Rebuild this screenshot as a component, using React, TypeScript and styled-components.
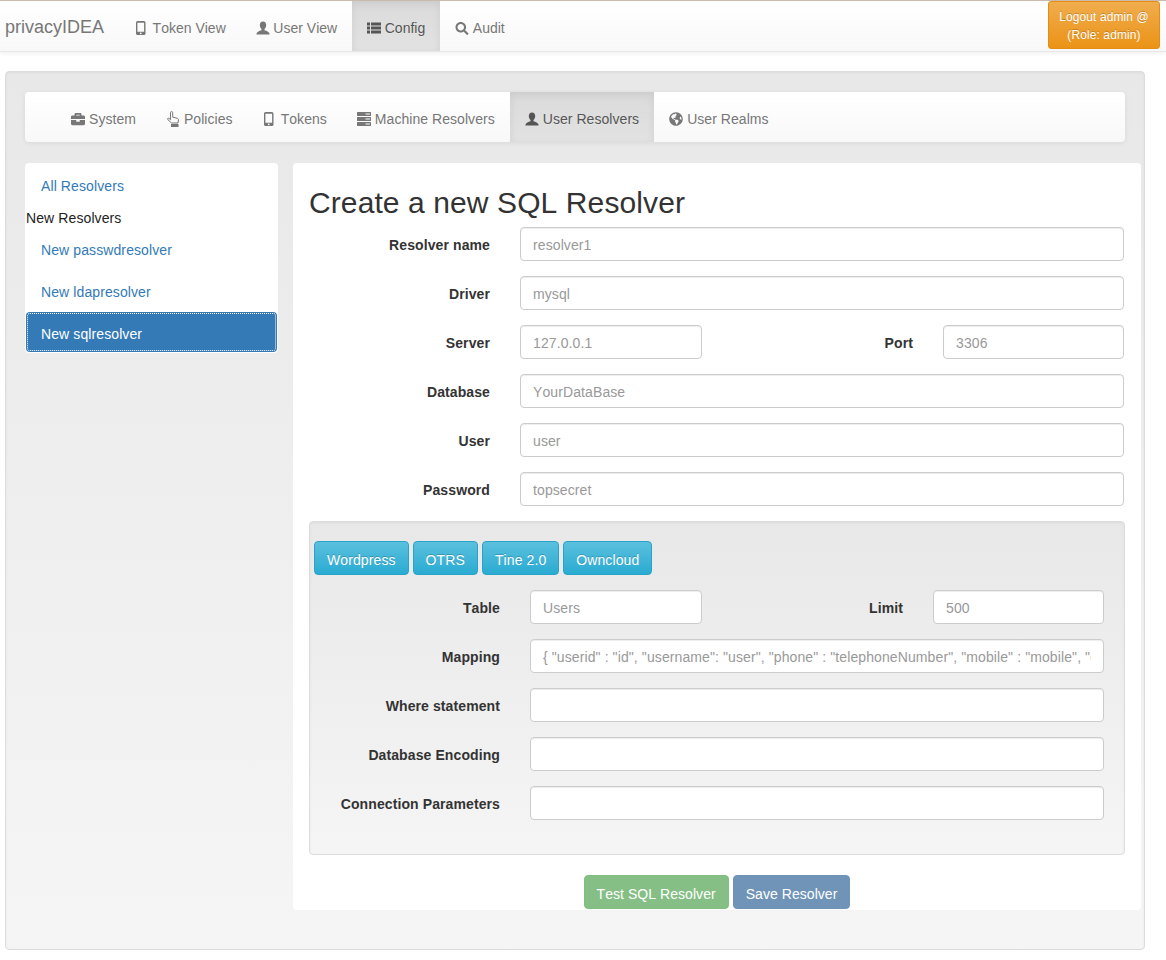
import React from 'react';
import styled, {createGlobalStyle} from 'styled-components';
import {FaSearch, FaBriefcase, FaGlobeAmericas} from 'react-icons/fa';

const GlobalStyle = createGlobalStyle`
  html, body {
    margin: 0;
    padding: 0;
    background: #fff;
    color: #333;
    font-family: "Liberation Sans", Arial, sans-serif;
    font-size: 14px;
    line-height: 20px;
    font-kerning: none;
    letter-spacing: 0.1px;
  }
  * {
    box-sizing: border-box;
  }
  input, button {
    font-kerning: none;
    letter-spacing: 0.1px;
  }
  input::placeholder {
    color: #999;
    opacity: 1;
  }
`;

const NavItem = styled.div<{$active?: boolean}>`
  display: flex;
  align-items: center;
  gap: 4px;
  height: 50px;
  padding: 4px 15px 0;
  letter-spacing: 0.05px;
  color: ${(props) => (props.$active ? '#555' : '#777')};
  text-shadow: 0 1px 0 rgba(255, 255, 255, 0.25);
  background: ${(props) => (props.$active ? 'linear-gradient(to bottom, #dbdbdb 0, #e2e2e2 100%)' : 'none')};
  box-shadow: ${(props) => (props.$active ? 'inset 0 3px 9px rgba(0, 0, 0, 0.075)' : 'none')};
  svg {
    flex: none;
    width: 14px;
  }
`;

const TopBar = styled.nav`
  display: flex;
  height: 52px;
  padding-left: 5px;
  border-top: 1px solid #c9bcae;
  border-bottom: 1px solid #e7e7e7;
  background: linear-gradient(to bottom, #fff 0, #f8f8f8 100%);
  box-shadow: 0 1px 5px rgba(0, 0, 0, 0.075);
  ${NavItem} {
    gap: 3.6px;
    letter-spacing: 0;
  }
`;

const Brand = styled.div`
  width: 115px;
  font-size: 18px;
  line-height: 52px;
  letter-spacing: 0;
  color: #777;
  text-shadow: 0 1px 0 rgba(255, 255, 255, 0.25);
`;

const LogoutButton = styled.button`
  width: 112px;
  height: 48px;
  margin: 0 6px 0 auto;
  padding: 6px 10px;
  border: 1px solid #e38d13;
  border-radius: 3px;
  background: linear-gradient(to bottom, #f0ad4e 0, #eb9316 100%);
  color: #fff;
  font-family: inherit;
  font-size: 12px;
  line-height: 18px;
  text-shadow: 0 -1px 0 rgba(0, 0, 0, 0.2);
`;

const Well = styled.main`
  margin: 19px 21px 0 5px;
  height: 879px;
  padding: 20px 19px;
  border: 1px solid #dcdcdc;
  border-radius: 4px;
  background: linear-gradient(to bottom, #e8e8e8 0, #f5f5f5 100%);
  box-shadow: inset 0 1px 3px rgba(0, 0, 0, 0.05);
`;

const SubNav = styled.nav`
  display: flex;
  height: 50px;
  padding-left: 31px;
  border-radius: 4px;
  background: linear-gradient(to bottom, #fff 0, #f8f8f8 100%);
  box-shadow: 0 1px 5px rgba(0, 0, 0, 0.075);
`;

const Columns = styled.div`
  display: flex;
  align-items: flex-start;
  gap: 15px;
  margin: 21px -16px 0 0;
`;

const Sidebar = styled.aside`
  flex: none;
  width: 253px;
  padding: 1px;
  border-radius: 4px;
  background: #fff;
`;

const SideLink = styled.div<{$active?: boolean}>`
  height: 40px;
  margin-bottom: 2px;
  padding: 12px 15px 8px;
  border-radius: 4px;
  color: ${(props) => (props.$active ? '#fff' : '#337ab7')};
  background: ${(props) => (props.$active ? '#337ab7' : 'none')};
  outline: ${(props) => (props.$active ? '1px dotted #fff' : 'none')};
  outline-offset: -2px;
  &:last-child {
    margin-bottom: 0;
  }
`;

const SideTitle = styled.div`
  margin-top: 4px;
  color: #222;
`;

const Panel = styled.section`
  flex: 1;
  min-width: 0;
  height: 747px;
  padding: 20px 16px 0;
  border-radius: 4px;
  background: #fff;
`;

const Title = styled.h2`
  margin: 3px 0 8px;
  font-size: 30px;
  font-weight: 500;
  line-height: 33px;
  color: #333;
`;

const Row = styled.div`
  display: grid;
  grid-template-columns: 181px 1fr;
  column-gap: 30px;
  align-items: center;
  height: 34px;
  margin-bottom: 15px;
`;

const SplitRow = styled.div`
  display: grid;
  grid-template-columns: 181px 182px 181px 181px;
  column-gap: 30px;
  align-items: center;
  height: 34px;
  margin-bottom: 15px;
`;

const Label = styled.label`
  position: relative;
  top: 1px;
  text-align: right;
  font-weight: 700;
  color: #333;
`;

const Input = styled.input`
  display: block;
  width: 100%;
  min-width: 0;
  height: 34px;
  padding: 7px 12px 5px;
  border: 1px solid #ccc;
  border-radius: 4px;
  background: #fff;
  box-shadow: inset 0 1px 1px rgba(0, 0, 0, 0.075);
  color: #555;
  font-family: inherit;
  font-size: 14px;
`;

const MainFields = styled.div`
  margin-right: 1px;
`;

const SubWell = styled.div`
  height: 334px;
  margin-top: 15px;
  padding: 19px 20px 0 4px;
  border: 1px solid #dcdcdc;
  border-radius: 4px;
  background: linear-gradient(to bottom, #e8e8e8 0, #f5f5f5 100%);
  box-shadow: inset 0 1px 3px rgba(0, 0, 0, 0.05);
`;

const Presets = styled.div`
  display: flex;
  gap: 4px;
  margin-bottom: 15px;
`;

const PresetButton = styled.button`
  height: 34px;
  padding: 8px 12px 4px;
  border: 1px solid #28a4c9;
  border-radius: 4px;
  background: linear-gradient(to bottom, #5bc0de 0, #2aabd2 100%);
  color: #fff;
  font-family: inherit;
  font-size: 14px;
  text-shadow: 0 -1px 0 rgba(0, 0, 0, 0.2);
`;

const Mapping = styled.div`
  padding-left: 16px;
  ${Row} {
    grid-template-columns: 170px 1fr;
  }
  ${SplitRow} {
    grid-template-columns: 170px 172px 171px 171px;
  }
`;

const Actions = styled.div`
  display: flex;
  justify-content: center;
  gap: 4px;
  margin-top: 20px;
`;

const ActionButton = styled.button<{$color: string; $border: string}>`
  height: 34px;
  padding: 8px 12px 4px;
  border: 1px solid ${(props) => props.$border};
  border-radius: 4px;
  background: ${(props) => props.$color};
  color: #fff;
  font-family: inherit;
  font-size: 14px;
  letter-spacing: 0.05px;
`;

// glyphicon look-alikes, react-icons has no such set
const PhoneIcon = () => (
  <svg height="14" viewBox="0 0 14 14" fill="currentColor">
    <path fillRule="evenodd" d="M2.6 0h6.3A1.6 1.6 0 0 1 10.5 1.6v10.8a1.6 1.6 0 0 1-1.6 1.6H2.6A1.6 1.6 0 0 1 1 12.4V1.6A1.6 1.6 0 0 1 2.6 0zm-.2 1.800v8.900h6.700V1.800zM5.750 11.400a.9.9 0 1 0 0 1.800.9.9 0 0 0 0-1.800z"/>
  </svg>
);

const UserIcon = () => (
  <svg height="14" viewBox="0 0 14 14" fill="currentColor">
    <path d="M7 .5C4.900.5 3.800 2.100 3.800 4.100c0 1.700.7 3.100 1.700 3.900v1.300C3.400 10.100.9 10.800.5 12.600v.9h13v-.9c-.4-1.800-2.900-2.500-5-3.300V8c1-.8 1.700-2.200 1.700-3.900C10.200 2.100 9.100.5 7 .5z"/>
  </svg>
);

const ListIcon = () => (
  <svg height="14" viewBox="0 0 14 14" fill="currentColor">
    <path d="M0 1.500h3v3H0zM4 1.500h10v3H4zM0 5.500h3v3H0zM4 5.500h10v3H4zM0 9.500h3v3H0zM4 9.500h10v3H4z"/>
  </svg>
);

const HandIcon = () => (
  <svg height="17" viewBox="0 0 14 17" fill="none" stroke="currentColor" strokeWidth="1">
    <path d="M4.500 8.700V1.700a1.100 1.100 0 0 1 2.200 0v4.500l4.300 1c1 .2 1.500.9 1.400 1.800L12 12H5.500L1.800 8.600c-.8-.9.3-1.900 1.200-1.200z"/>
    <path fill="currentColor" stroke="none" d="M5 13h7.500v3H5z"/>
  </svg>
);

const TasksIcon = () => (
  <svg height="14" viewBox="0 0 14 14" fill="currentColor">
    <path fillRule="evenodd" d="M.5 0h13a.5.5 0 0 1 .5.5v3a.5.5 0 0 1-.5.5H.5a.5.5 0 0 1-.5-.5v-3A.5.5 0 0 1 .5 0zm8 1.500v1H13v-1zM.5 5h13a.5.5 0 0 1 .5.5v3a.5.5 0 0 1-.5.5H.5a.5.5 0 0 1-.5-.5v-3A.5.5 0 0 1 .5 5zm8 1.500v1H13v-1zM.5 10h13a.5.5 0 0 1 .5.5v3a.5.5 0 0 1-.5.5H.5a.5.5 0 0 1-.5-.5v-3a.5.5 0 0 1 .5-.5zm8 1.500v1H13v-1z"/>
  </svg>
);

const navItems = [
  {label: 'Token View', icon: <PhoneIcon/>},
  {label: 'User View', icon: <UserIcon/>},
  {label: 'Config', icon: <ListIcon/>, active: true},
  {label: 'Audit', icon: <FaSearch size={13}/>},
];

const subItems = [
  {label: 'System', icon: <FaBriefcase size={14}/>},
  {label: 'Policies', icon: <HandIcon/>},
  {label: 'Tokens', icon: <PhoneIcon/>},
  {label: 'Machine Resolvers', icon: <TasksIcon/>},
  {label: 'User Resolvers', icon: <UserIcon/>, active: true},
  {label: 'User Realms', icon: <FaGlobeAmericas size={14}/>},
];

const mappingText = '{ "userid" : "id", "username": "user", "phone" : "telephoneNumber", "mobile" : "mobile", "email" : "mail", "surname" : "sn", "givenname" : "givenName" }';

function App() {
  return (
    <>
      <GlobalStyle/>
      <TopBar>
        <Brand>privacyIDEA</Brand>
        {navItems.map((item) => (
          <NavItem key={item.label} $active={item.active}>{item.icon}{item.label}</NavItem>
        ))}
        <LogoutButton>Logout admin @ (Role: admin)</LogoutButton>
      </TopBar>
      <Well>
        <SubNav>
          {subItems.map((item) => (
            <NavItem key={item.label} $active={item.active}>{item.icon}{item.label}</NavItem>
          ))}
        </SubNav>
        <Columns>
          <Sidebar>
            <SideLink>All Resolvers</SideLink>
            <SideTitle>New Resolvers</SideTitle>
            <SideLink>New passwdresolver</SideLink>
            <SideLink>New ldapresolver</SideLink>
            <SideLink $active>New sqlresolver</SideLink>
          </Sidebar>
          <Panel>
            <Title>Create a new SQL Resolver</Title>
            <MainFields>
              <Row>
                <Label>Resolver name</Label>
                <Input placeholder="resolver1"/>
              </Row>
              <Row>
                <Label>Driver</Label>
                <Input placeholder="mysql"/>
              </Row>
              <SplitRow>
                <Label>Server</Label>
                <Input placeholder="127.0.0.1"/>
                <Label>Port</Label>
                <Input placeholder="3306"/>
              </SplitRow>
              <Row>
                <Label>Database</Label>
                <Input placeholder="YourDataBase"/>
              </Row>
              <Row>
                <Label>User</Label>
                <Input placeholder="user"/>
              </Row>
              <Row>
                <Label>Password</Label>
                <Input placeholder="topsecret"/>
              </Row>
            </MainFields>
            <SubWell>
              <Presets>
                <PresetButton>Wordpress</PresetButton>
                <PresetButton>OTRS</PresetButton>
                <PresetButton>Tine 2.0</PresetButton>
                <PresetButton>Owncloud</PresetButton>
              </Presets>
              <Mapping>
                <SplitRow>
                  <Label>Table</Label>
                  <Input placeholder="Users"/>
                  <Label>Limit</Label>
                  <Input placeholder="500"/>
                </SplitRow>
                <Row>
                  <Label>Mapping</Label>
                  <Input placeholder={mappingText}/>
                </Row>
                <Row>
                  <Label>Where statement</Label>
                  <Input/>
                </Row>
                <Row>
                  <Label>Database Encoding</Label>
                  <Input/>
                </Row>
                <Row>
                  <Label>Connection Parameters</Label>
                  <Input/>
                </Row>
              </Mapping>
            </SubWell>
            <Actions>
              <ActionButton $color="#85bf85" $border="#82bd82">Test SQL Resolver</ActionButton>
              <ActionButton $color="#7094b7" $border="#6f93b6">Save Resolver</ActionButton>
            </Actions>
          </Panel>
        </Columns>
      </Well>
    </>
  );
}

export default App;
